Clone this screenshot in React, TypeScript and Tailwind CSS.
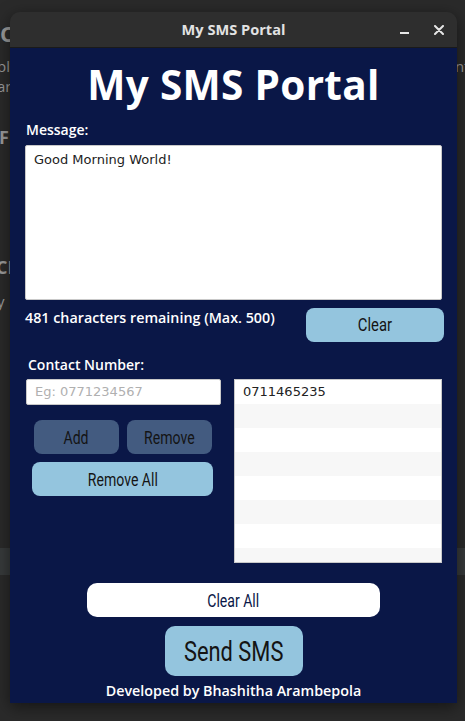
const condensed = "inline-block whitespace-nowrap font-['Roboto',sans-serif] font-normal scale-x-[0.78]"

function Btn({ className, label, textClass }: { className: string; label: string; textClass: string }) {
  return (
    <button className={`rounded-[8px] flex items-center justify-center ${className}`}>
      <span className={`${condensed} ${textClass}`}>{label}</span>
    </button>
  )
}

export default function App() {
  const contacts = ['0711465235', '', '', '', '', '', '', '']

  return (
    <div className="relative w-[465px] h-[721px] overflow-hidden bg-[#2a2a2a] font-['Open_Sans',sans-serif]">
      {/* Desktop behind the window */}
      <div className="absolute inset-0 text-[#9a9a9a]">
        <span className="absolute left-[-12px] top-[17px] text-[22px] font-bold">SC</span>
        <span className="absolute left-[-3px] top-[55px] text-[15px]">pl</span>
        <span className="absolute left-[-3px] top-[75px] text-[15px]">ar</span>
        <span className="absolute left-[-1px] top-[124px] text-[18px] font-bold">F</span>
        <span className="absolute left-[-4px] top-[254px] text-[18px] font-bold">CE</span>
        <span className="absolute left-[-3px] top-[290px] text-[15px]">y</span>
        <span className="absolute left-[455px] top-[55px] text-[15px]">nt</span>
        <div className="absolute left-0 right-0 top-[548px] h-[27px] bg-[#373a3b]" />
      </div>

      {/* Window */}
      <div className="absolute left-[10px] top-[12px] w-[447px] rounded-t-[10px] overflow-hidden shadow-[0_4px_16px_rgba(0,0,0,0.5)]">
        <div className="relative h-[36px] bg-[#2e2e2e] border-b border-[#1a1a1a] flex items-center justify-center">
          <span className="text-[14.6px] font-bold text-[#e2e2e2]">My SMS Portal</span>
          <div className="absolute right-[13px] top-0 h-full flex items-center gap-[25px]">
            <span className="w-[9px] h-[2px] mt-[6px] bg-[#e6e6e6]" />
            <svg width="10" height="10" viewBox="0 0 10 10">
              <path d="M1 1 L9 9 M9 1 L1 9" stroke="#e6e6e6" strokeWidth="2" strokeLinecap="round" />
            </svg>
          </div>
        </div>

        <div className="bg-[#0a1747] h-[655px] px-[15px] text-white flex flex-col">
          <h1 className="text-center text-[40.5px] font-bold leading-none pt-[17px] tracking-[0.3px]">My SMS Portal</h1>

          <div className="mt-[15px] text-[14px] font-semibold pl-[1px] leading-[18px]">Message:</div>
          <div className="mt-[6px] h-[155px] bg-white rounded-[2px] border border-[#c9c9c9] px-[8px] py-[4px] text-[13px] text-[#222] font-['DejaVu_Sans',sans-serif]">
            Good Morning World!
          </div>

          <div className="flex justify-between mt-[8px]">
            <div className="text-[14.3px] font-semibold leading-[18px] pt-[1px]">481 characters remaining (Max. 500)</div>
            <Btn className="w-[138px] h-[34px] bg-[#94c5de] mr-[-2px] pt-[2px]" label="Clear" textClass="text-[19px] text-[#141414]" />
          </div>

          <div className="mt-[14px] text-[14px] font-semibold leading-[18px] pl-[3px]">Contact Number:</div>

          <div className="flex justify-between mt-[5px]">
            <div className="w-[196px] flex flex-col">
              <div className="ml-[1px] h-[26px] bg-white rounded-[2px] border border-[#c9c9c9] px-[8px] flex items-center text-[13px] text-[#b0b0b0] font-['DejaVu_Sans',sans-serif]">
                Eg: 0771234567
              </div>
              <div className="flex gap-[8px] mt-[15px] pl-[9px]">
                <Btn className="w-[85px] h-[34px] bg-[#435b80] pt-[2px]" label="Add" textClass="text-[18px] text-[#141414]" />
                <Btn className="w-[85px] h-[34px] bg-[#435b80] pt-[2px]" label="Remove" textClass="text-[18px] text-[#141414]" />
              </div>
              <Btn className="mt-[8px] ml-[7px] w-[181px] h-[34px] bg-[#94c5de] pt-[1px]" label="Remove All" textClass="text-[18px] text-[#141414]" />
            </div>
            <div className="w-[208px] h-[184px] border border-[#c9c9c9] bg-white overflow-hidden">
              {contacts.map((c, i) => (
                <div
                  key={i}
                  className={`h-[24px] px-[8px] flex items-center text-[13px] text-[#222] font-['DejaVu_Sans',sans-serif] ${i % 2 === 1 ? 'bg-[#f7f7f7]' : 'bg-white'}`}
                >
                  {c}
                </div>
              ))}
            </div>
          </div>

          <div className="flex justify-center mt-[20px]">
            <Btn className="w-[293px] h-[34px] bg-white rounded-[10px] pt-[1px]" label="Clear All" textClass="text-[18px] text-[#0a1747]" />
          </div>
          <div className="flex justify-center mt-[9px]">
            <Btn className="w-[138px] h-[50px] rounded-[10px] bg-[#94c5de] pt-[2px]" label="Send SMS" textClass="text-[28px] text-[#141414]" />
          </div>
          <div className="text-center text-[14.3px] font-semibold mt-[6px] leading-[18px]">Developed by Bhashitha Arambepola</div>
        </div>
      </div>
    </div>
  )
}
